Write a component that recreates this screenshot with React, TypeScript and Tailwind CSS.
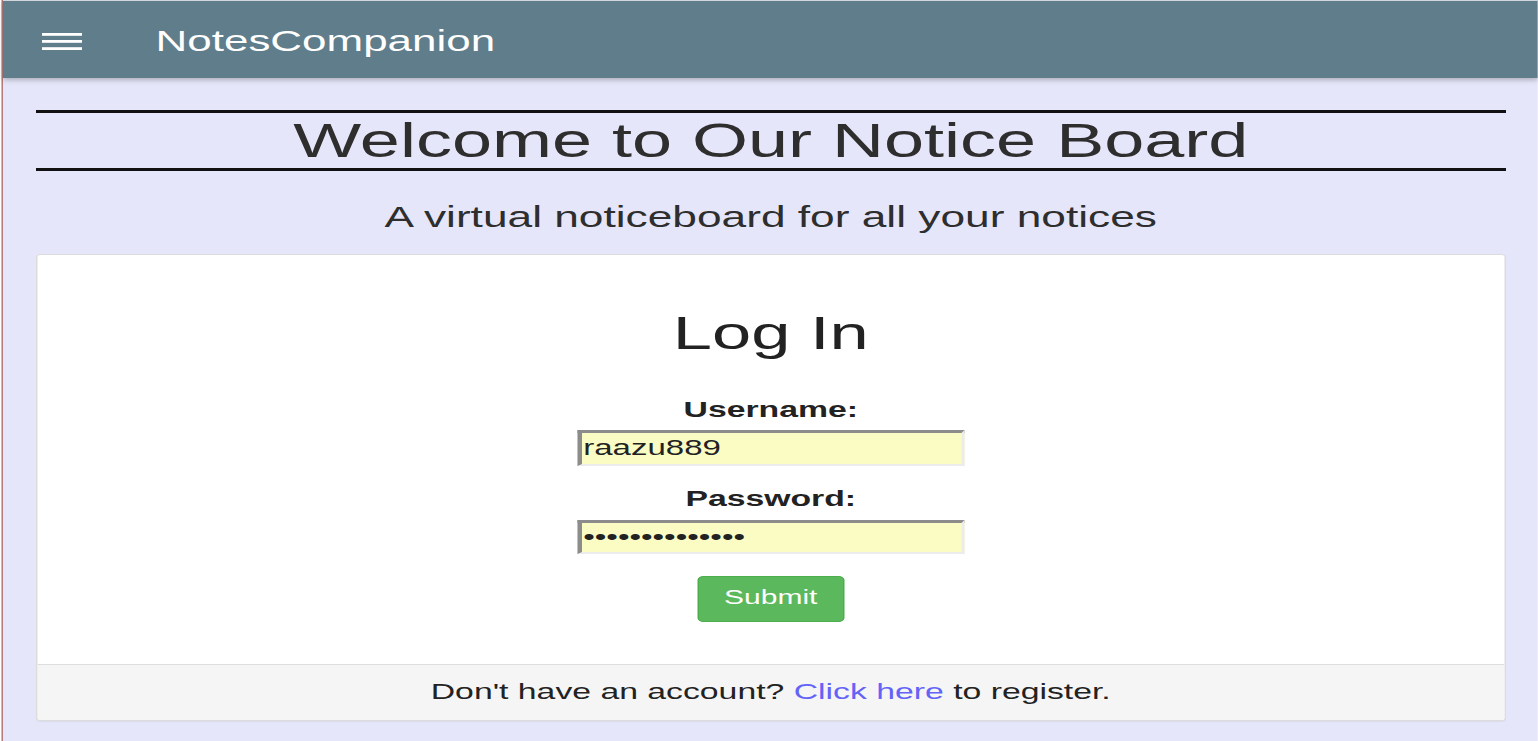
import { useState } from "react"

export default function App() {
  const [username, setUsername] = useState("raazu889")
  const [password, setPassword] = useState("noticeboard201")

  return (
    <div className="min-h-screen overflow-hidden bg-[#e6e6fa] font-['Liberation_Sans',Arial,sans-serif]">
      {/* page is drawn 1.5x wider than tall, like the original capture */}
      <div className="flex min-h-screen w-[1025.333px] origin-top-left scale-x-150 bg-white pl-[1.333px]">
        <div className="flex min-h-screen flex-1 flex-col border-l border-[#b57a7a] bg-[#e6e6fa]">
          {/* Navbar */}
          <nav className="flex h-[78px] items-center border-t border-[#d0d6da] bg-[#607d8b] pl-[25.7px] shadow-[0_2px_4px_rgba(0,0,0,0.25)]">
            <svg className="mt-[4px]" width="26.7" height="17" viewBox="0 0 26.7 17" fill="#ffffff">
              <rect x="0" y="0" width="26.7" height="2.8" />
              <rect x="0" y="7" width="26.7" height="2.8" />
              <rect x="0" y="14.2" width="26.7" height="2.8" />
            </svg>
            <span className="ml-[49px] mt-[3px] text-[29.3px] leading-[34px] text-white">NotesCompanion</span>
          </nav>

          {/* Main content */}
          <main className="mx-[21.5px] mt-[32px]">
            <h1 className="border-y-[3px] border-[#111] text-center text-[48px] font-normal leading-[55px] text-[#2e2e2e]">
              Welcome to Our Notice Board
            </h1>
            <p className="mt-[28px] text-center text-[29.5px] leading-[35px] text-[#2e2e2e]">
              A virtual noticeboard for all your notices
            </p>

            <div className="mt-[20px] overflow-hidden rounded-[3px] border border-[#dcdcdc] bg-white shadow-[0_1px_1px_rgba(0,0,0,0.05)]">
              <form
                className="flex flex-col items-center pb-[42px] pt-[51px]"
                onSubmit={(e) => e.preventDefault()}
              >
                <h2 className="text-[47px] font-normal leading-[54px] text-[#222]">Log In</h2>

                <label htmlFor="username" className="mt-[36.5px] block text-[22.5px] font-bold leading-[26px] text-[#222]">
                  Username:
                </label>
                <input
                  id="username"
                  type="text"
                  value={username}
                  onChange={(e) => setUsername(e.target.value)}
                  className="mt-[7px] h-[36px] w-[258px] border-b-2 border-l-[3px] border-r-2 border-t-[3px] border-b-[#ececec] border-l-[#8c8c8c] border-r-[#ececec] border-t-[#8c8c8c] bg-[#fafcc4] px-[1px] text-[22px] text-[#222] outline-none"
                />

                <label htmlFor="password" className="mt-[20px] block text-[22.5px] font-bold leading-[26px] text-[#222]">
                  Password:
                </label>
                <input
                  id="password"
                  type="password"
                  value={password}
                  onChange={(e) => setPassword(e.target.value)}
                  className="mt-[8px] h-[34px] w-[258px] border-b-2 border-l-[3px] border-r-2 border-t-[3px] border-b-[#ececec] border-l-[#8c8c8c] border-r-[#ececec] border-t-[#8c8c8c] bg-[#fafcc4] px-[1px] text-[22px] text-[#222] outline-none"
                />

                <button
                  type="submit"
                  className="mt-[22px] h-[46px] w-[98px] rounded-[4px] border border-[#4cae4c] bg-[#5cb85c] pb-[3px] text-[20px] leading-none text-white"
                >
                  Submit
                </button>
              </form>

              {/* Footer */}
              <div className="border-t border-[#dddddd] bg-[#f5f5f5] pb-[15px] pt-[14px] text-center text-[22.5px] leading-[26px] text-[#222]">
                Don't have an account?{" "}
                <a href="#" className="text-[#6363f7]">
                  Click here
                </a>{" "}
                to register.
              </div>
            </div>
          </main>
        </div>
      </div>
    </div>
  )
}
